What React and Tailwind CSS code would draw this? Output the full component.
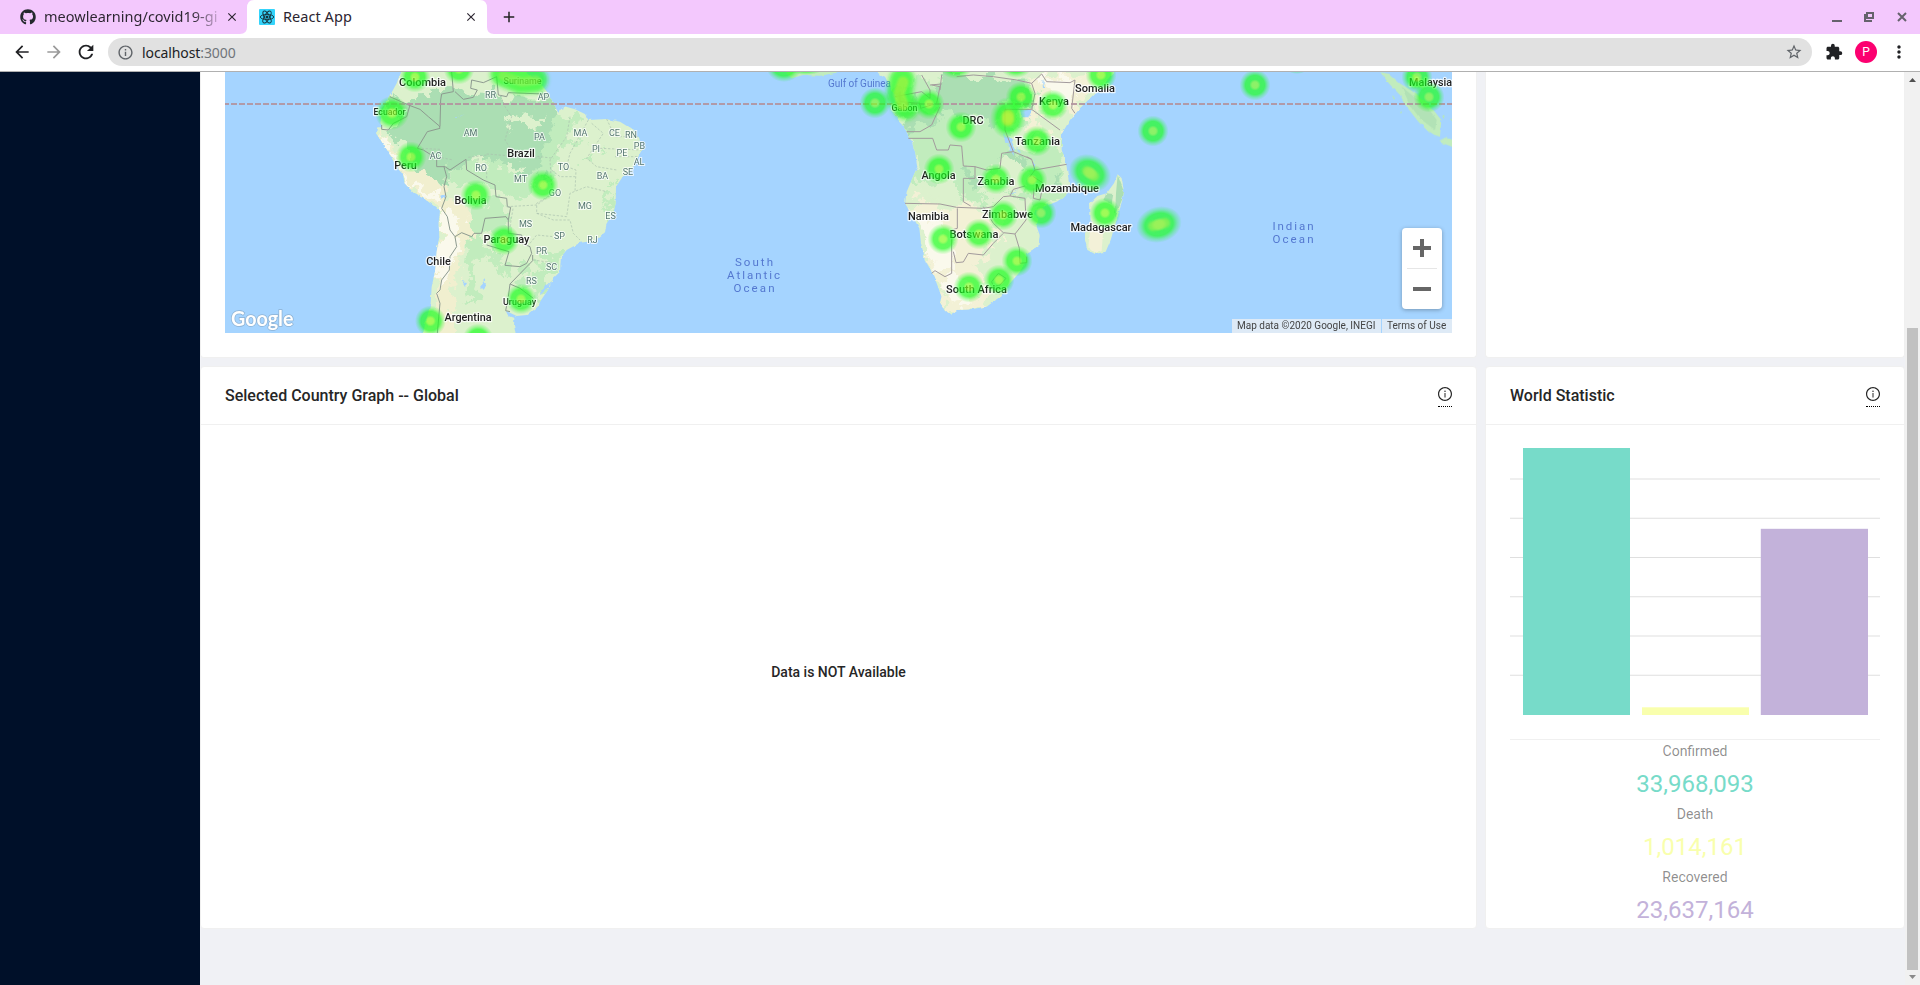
import React from "react";
import { MdExtension, MdStarBorder, MdArrowBack, MdArrowForward, MdRefresh, MdMoreVert, MdInfoOutline, MdClose, MdAdd } from "react-icons/md";
import { FaGithub } from "react-icons/fa";
import { AiOutlineInfoCircle } from "react-icons/ai";

const UI = "font-['Noto_Sans','Open_Sans',sans-serif]";

function ReactIcon() {
  return (
    <svg className="size-4" viewBox="0 0 16 16">
      <rect width="16" height="16" rx="1" fill="#35d4fb" />
      <g fill="none" stroke="#16323c" strokeWidth="0.9">
        <ellipse cx="8" cy="8" rx="6.7" ry="2.6" />
        <ellipse cx="8" cy="8" rx="6.7" ry="2.6" transform="rotate(60 8 8)" />
        <ellipse cx="8" cy="8" rx="6.7" ry="2.6" transform="rotate(120 8 8)" />
      </g>
      <circle cx="8" cy="8" r="1.5" fill="#16323c" />
    </svg>
  );
}

function TabBar() {
  return (
    <div className={`flex h-[34px] shrink-0 items-end bg-[#f3c8fd] text-[#2b2530] ${UI}`}>
      <div className="flex h-[34px] w-[240px] items-center pl-5">
        <FaGithub className="size-4 shrink-0 text-[#24292e]" />
        <div className="ml-2 w-[174px] shrink-0 whitespace-nowrap bg-gradient-to-r from-[#2b2530] from-85% to-[#2b2530]/20 bg-clip-text text-[14.5px] tracking-[0.02px] text-transparent">
          meowlearning/covid19-gi
        </div>
        <MdClose className="ml-[7px] size-3.5 shrink-0" />
      </div>
      <svg className="h-[34px] w-[14px] shrink-0" viewBox="0 0 14 34">
        <path d="M0 34 Q7 34 7 27 V8 Q7 0 14 0 V34 Z" fill="#fff" />
      </svg>
      <div className="flex h-[34px] w-[226px] items-center bg-white pl-[5px]">
        <ReactIcon />
        <span className="ml-2 w-[181px] text-[14.5px] tracking-[0.05px]">React App</span>
        <MdClose className="size-3.5" />
      </div>
      <svg className="h-[34px] w-[14px] shrink-0" viewBox="0 0 14 34">
        <path d="M14 34 Q7 34 7 27 V8 Q7 0 0 0 V34 Z" fill="#fff" />
      </svg>
      <div className="flex h-[34px] items-center pl-1.5">
        <MdAdd className="size-[18px] text-[#222]" />
      </div>
      <svg className="ml-auto mr-3 h-[34px] w-[77px]" viewBox="0 0 77 34">
        <g fill="none" stroke="#65626c" strokeWidth="2">
          <path d="M1 21H11" />
          <path d="M36 13H42V18H36Z" />
          <path d="M34 14V21H41" />
          <path d="M67 13L75 21M75 13L67 21" />
        </g>
      </svg>
    </div>
  );
}

function Toolbar() {
  return (
    <div className={`flex h-[38px] shrink-0 items-center border-b border-[#b0b0b0] bg-white pb-px pl-3 text-[#202124] ${UI}`}>
      <MdArrowBack className="size-5" />
      <MdArrowForward className="ml-3 size-5 text-[#9a9a9a]" />
      <MdRefresh className="ml-[11px] size-[22px]" />
      <div className="ml-[11px] flex h-7 w-[1704px] items-center rounded-full bg-[#e1e1e1] pl-[9px] pr-[9px]">
        <MdInfoOutline className="size-[17px] text-[#5f6368]" />
        <span className="ml-2 text-[14px] tracking-[-0.1px]">
          localhost<span className="text-[#70757a]">:3000</span>
        </span>
        <MdStarBorder className="ml-auto size-[18px] text-[#5f6368]" />
      </div>
      <MdExtension className="ml-[13px] size-[18px]" />
      <div className="ml-3 flex size-[22px] items-center justify-center rounded-full bg-[#fc0070] text-[12px] leading-none text-white font-['Roboto',sans-serif]">P</div>
      <MdMoreVert className="ml-3 size-5" />
    </div>
  );
}

/* Map geometry is kept in thirds of a pixel, one local frame for each continent. */
const SA = "translate(340 70) scale(0.33333)";
const AF = "translate(840 70) scale(0.33333)";
const AS = "translate(1100 70) scale(0.33333)";

const SA_LAND =
  "M190 -10L170 40L148 80L135 105L125 130L121 160L130 172L112 172L108 190L125 215L145 245L165 282L188 308L194 340L220 368L255 388L285 410L300 422L296 460L298 500L290 545L286 600L275 650L272 700L262 740L246 800H528L522 765L523 745L505 738L497 722L530 738L560 735L590 710L610 680L630 650L640 625L660 605L663 560L680 540L720 518L765 512L795 487L800 460L820 430L827 400L828 350L845 325L880 290L905 240L898 205L880 180L840 155L800 147L745 150L735 132L705 118L670 108L655 128L640 100L625 70L600 40L560 10V-10Z";
const AF_LAND =
  "M105 -10L115 10L135 20L150 50L165 75L166 95L155 120L170 145L190 165L202 190L215 215L225 245L232 290L215 330L200 365L195 400L215 435L238 475L243 520L255 570L275 605L290 640L305 680L300 697L315 720L332 734L350 720L390 718L440 710L480 680L510 640L540 605L560 575L558 550L595 530L599 495L590 470L595 445L580 430L610 410L650 395L680 375L687 340L680 290L672 260L665 240L666 190L690 150L720 115L780 55L822 10V-10Z";
const MADAGASCAR =
  "M833 313L845 325L852 365L845 400L832 440L812 510L797 545L765 552L742 540L735 510L735 490L752 460L750 400L772 378L800 370L822 340Z";
const SUMATRA =
  "M840 6L868 12L900 40L930 58L965 85L1000 120L1024 150L1020 200L1008 198L980 180L955 155L920 110L900 75L868 42Z";
const JAVA = "M1018 212L1035 203L1070 212V236L1035 222Z";

const SEA_LABELS = [
  ["South", 754, 266, 38],
  ["Atlantic", 753.5, 279, 53],
  ["Ocean", 754, 292, 41],
  ["Indian", 1293, 230, 41],
  ["Ocean", 1293, 243, 41],
];

const COUNTRIES = [
  ["Colombia", 422.5, 86, 47], ["Ecuador", 389.5, 115.5, 32, 9], ["Peru", 405.5, 169.5, 22.5],
  ["Brazil", 521, 157, 27.5], ["Bolivia", 470.5, 204.5, 32], ["Paraguay", 506.5, 243.5, 46],
  ["Chile", 438.5, 265.5, 24.5], ["Uruguay", 519.5, 305.5, 33, 9], ["Argentina", 468, 321.5, 47],
  ["Suriname", 522.5, 84.5, 38, 9], ["Somalia", 1095, 92, 40], ["Kenya", 1054, 105, 30],
  ["DRC", 973, 124, 21], ["Gabon", 904.5, 111, 26, 9], ["Tanzania", 1037.5, 145, 45],
  ["Angola", 938.5, 179, 34], ["Zambia", 996, 185, 37], ["Mozambique", 1067, 192, 64],
  ["Namibia", 928.5, 220, 41], ["Zimbabwe", 1007.5, 218, 51], ["Botswana", 974, 238, 49],
  ["Madagascar", 1101, 231, 61], ["South Africa", 976.5, 293, 61], ["Malaysia", 1430.5, 86, 43],
];

const STATES = [
  ["RR", 490.5, 98], ["AP", 543.5, 99.5], ["AM", 470.5, 135.5], ["PA", 539.5, 139.5],
  ["MA", 580.5, 135.5], ["CE", 614.5, 135.5], ["RN", 631, 137.5], ["PB", 639.5, 148.5],
  ["PE", 622, 155.5], ["PI", 596, 151.5], ["AL", 639, 164.5], ["SE", 628, 174.5],
  ["BA", 602.5, 178.5], ["TO", 563.5, 169.5], ["AC", 435.5, 158.5], ["RO", 481, 170.5],
  ["MT", 520.5, 181.5], ["GO", 555, 195.5], ["MG", 585, 208.5], ["ES", 610.5, 218.5],
  ["MS", 525.5, 226.5], ["SP", 559.5, 238.5], ["RJ", 592.5, 242.5], ["PR", 541.5, 253.5],
  ["SC", 551.5, 269.5], ["RS", 531.5, 283.5],
];

/* x, y, rx, ry, rotation */
const HEAT = [
  [415, 77], [459, 69],
  [392, 113, 17, 17], [411, 157], [476, 195], [543, 185], [504, 240], [521, 299], [430.5, 321], [478, 339],
  [784, 66, 18, 16], [806, 66, 20, 9], [875, 103], [929, 104],
  [956, 64, 18, 15], [1016, 64, 17, 14], [1021, 97], [1053, 105], [1008, 118, 18, 21], [961, 127], [1037, 141],
  [1101, 75], [1153, 131], [1090, 173, 22, 18, 30], [1159, 224.5, 23, 18, -15], [939, 169], [996, 179],
  [1032, 180], [1041, 213], [1003, 215], [979, 234], [943, 239], [1105, 213], [1017, 261], [999, 280],
  [969, 287], [1255, 85], [1297, 62, 15, 12], [1417, 77], [1429, 97],
];

const SA_DARK =
  "M150 85L250 88L300 60L420 62L470 78L560 88L630 85L655 125L640 160L625 190L622 230L605 270L600 310L560 335L520 310L480 290L470 250L430 265L410 290L375 280L345 292L320 300L318 350L290 335L240 310L215 290L205 240L170 205L140 190L165 150Z";
const SA_MID =
  "M250 88L620 78L650 130L720 150L690 200L720 215L650 230L660 270L640 300L600 345L540 380L500 365L430 330L330 350L320 300L210 280Z M400 430L470 385L510 400L480 470L420 500L395 600L370 620L385 500Z M430 440L500 450L505 490L425 490Z M560 590L600 600L660 600L640 640L600 690L570 660L520 640Z M590 560L660 540L680 540L660 560L655 600L600 590Z M500 580L490 620L470 600L445 560L410 560L400 620L420 680L400 720L380 640L395 540L480 540Z M740 290L770 260L760 235L745 270Z M800 330L828 350L820 430L790 460L810 390Z";
const SA_CREAM =
  "M110 175L150 215L195 275L245 310L305 345L318 385L380 410L395 440L385 500L360 560L345 620L350 700L330 800H246L272 700L286 600L296 500L300 422L220 368L180 310L108 190Z";
const SA_WHITE =
  "M300 425L335 440L370 430L360 490L340 560L320 600L295 680L290 620L300 520Z M160 275L200 320L280 375L300 400L255 380L200 335Z M120 185L150 230L180 290L165 280L125 215Z";

const AF_DARK =
  "M300 15L460 15L530 25L560 60L530 100L490 110L480 150L460 180L440 150L350 145L300 130L280 80Z M165 80L250 75L240 120L290 130L255 170L200 175L160 125Z M545 60L580 80L575 115L540 110Z M480 260L530 250L560 270L520 290L490 280Z M370 300L420 310L400 350L370 330Z M640 310L672 320L665 360L640 345Z";
const AF_MID =
  "M160 55L300 20L580 40L560 120L500 190L520 240L600 230L665 210L687 340L650 395L600 410L570 380L500 370L440 390L400 400L300 350L215 330L232 290L215 215L160 130Z";
const AF_CREAM =
  "M205 390L300 405L430 415L480 460L480 520L440 560L400 590L440 640L440 700L332 734L300 697L305 680L243 520L238 475L195 405Z M580 20L720 10L800 10L700 120L660 170L580 110Z M540 110L600 140L640 190L600 220L560 190Z";
const AF_WHITE =
  "M215 430L260 440L330 500L335 600L300 600L250 540Z M295 640L340 620L400 650L380 690L320 700Z M600 15L700 35L690 110L640 120L620 50Z";

const SA_BORDERS = [
  "M150 80L205 105L240 118L265 140L298 168L300 175L262 185L232 235L250 240L290 265L290 290L315 290L330 300L378 268L380 300L430 330L465 345L468 380L500 385L502 410L512 412L505 450L498 440L435 445L425 490L402 490L395 500L365 488L345 500L330 480L322 440L305 415L318 380L312 350L320 320L312 290",
  "M300 170L302 90L305 72L340 65L335 5",
  "M345 65L370 88L400 82L412 60L392 55L395 30L430 38L470 20L475 75L500 80L505 68L610 72",
  "M125 165L125 178L145 180L160 160L200 140L210 105",
  "M505 450L505 490L545 495L545 520L570 530L575 550L560 580L540 590L495 586L507 545L440 525",
  "M345 500L350 530L330 560L328 600L305 630L300 660L290 670L300 700L292 789",
  "M578 555L578 572L510 642L505 680L497 722L510 725M510 642L540 655L580 685",
];
const SA_STATES = [
  "M245 235L300 238L300 262L340 270M440 252L605 265M385 262L440 255M480 75L495 110L515 140L495 210L520 250",
  "M690 140L680 200L630 270L635 350M745 150L690 250L680 290L708 300L705 365M635 300L660 320L705 320",
  "M500 410L590 405L640 370L590 400L590 430L680 440L690 370L740 350L800 365",
  "M590 430L640 450L690 450L700 490L720 510M510 470L520 410M570 520L590 495L640 500M580 570L650 580",
  "M755 160L790 190L740 265L770 290L830 300M800 147L825 200L895 200M780 235L905 240M825 260L895 260",
  "M520 250L640 265M415 265L410 285L440 300L440 330",
];
const AF_BORDERS = [
  "M165 80L245 65L270 85L270 60L245 15M180 65L180 95L240 100L242 115L290 100L300 50L275 45M300 60L305 15",
  "M200 185L240 185L275 165L300 110M205 205L278 205L290 240L325 240L330 225L365 228L370 288L405 290L405 325L370 325L370 395L392 408",
  "M270 45L305 42M350 20L400 15L460 20L530 30L575 40L605 12M575 40L585 70L575 118L495 118L495 180L520 245L485 250L480 295L440 300L405 290",
  "M575 118L660 180M605 12L620 35L690 38L705 30L695 115L705 130M520 245L575 268L585 300L680 283",
  "M575 268L560 260M580 320L610 340L600 390L580 385L582 355M510 378L520 358L555 348M585 300L570 320",
  "M195 400L300 402L350 412L430 415L460 410L490 380L510 378L555 385L558 450L525 492L490 488L460 460L430 410M352 415L352 475L335 480L335 610L315 620L285 602L275 610",
  "M340 545L348 578L370 576L385 550L430 555L460 520L490 490M525 492L538 535L540 580L560 578L560 560M455 635L475 610L498 625L480 645L460 650Z",
];

function WorldMap() {
  return (
    <svg className="block h-[261px] w-[1227px]" viewBox="225 72 1227 261">
      <defs>
        <radialGradient id="heat">
          <stop offset="0" stopColor="#86ff20" stopOpacity="0.68" />
          <stop offset="0.2" stopColor="#7cff20" stopOpacity="0.68" />
          <stop offset="0.36" stopColor="#1cff1c" stopOpacity="0.7" />
          <stop offset="0.62" stopColor="#18ff1c" stopOpacity="0.68" />
          <stop offset="0.8" stopColor="#18ff1c" stopOpacity="0.3" />
          <stop offset="1" stopColor="#18ff1c" stopOpacity="0" />
        </radialGradient>
        <filter id="glow" filterUnits="userSpaceOnUse" x="440" y="50" width="520" height="90">
          <feGaussianBlur stdDeviation="2.2" />
        </filter>
        <filter id="soft" filterUnits="userSpaceOnUse" x="440" y="50" width="760" height="220">
          <feGaussianBlur stdDeviation="1.1" />
        </filter>
        <filter id="rough" x="-5%" y="-5%" width="110%" height="110%">
          <feTurbulence type="fractalNoise" baseFrequency="0.12" numOctaves="3" seed="4" />
          <feDisplacementMap in="SourceGraphic" scale="7" xChannelSelector="R" yChannelSelector="G" />
        </filter>
        <filter id="veg" x="-5%" y="-5%" width="110%" height="110%">
          <feTurbulence type="fractalNoise" baseFrequency="0.07" numOctaves="4" seed="9" />
          <feDisplacementMap in="SourceGraphic" scale="32" xChannelSelector="R" yChannelSelector="G" />
        </filter>
        <filter id="coast">
          <feTurbulence type="fractalNoise" baseFrequency="0.15" numOctaves="2" seed="2" />
          <feDisplacementMap in="SourceGraphic" scale="3" xChannelSelector="R" yChannelSelector="G" />
        </filter>
        <clipPath id="sa"><path transform={SA} d={SA_LAND} /></clipPath>
        <clipPath id="af"><path transform={AF} d={AF_LAND} /></clipPath>
      </defs>
      <rect x="225" y="72" width="1227" height="261" fill="#a5d4ff" />

      <g filter="url(#coast)">
        <g clipPath="url(#sa)">
          <rect x="340" y="60" width="320" height="290" fill="#dcf1cd" />
          <g filter="url(#veg)"><g transform={SA}>
            <path d={SA_MID} fill="#c1ecbd" />
            <path d={SA_DARK} fill="#abdeb3" />
            <path d={SA_CREAM} fill="#f1efcf" />
            <path d={SA_WHITE} fill="#faf9ec" />
            <path d="M500 150L560 130L620 150L580 170L520 165Z M480 290L560 290L530 320L490 315Z M170 40L200 30L220 80L180 75Z M400 265L450 270L440 300L405 295Z" fill="#dcf1cd" />
          </g></g>
        </g>
        <g clipPath="url(#af)">
          <rect x="860" y="60" width="300" height="270" fill="#dcf1cd" />
          <g filter="url(#veg)"><g transform={AF}>
            <path d={AF_MID} fill="#c1ecbd" />
            <path d={AF_DARK} fill="#abdeb3" />
            <path d={AF_CREAM} fill="#f3f1d6" />
            <path d={AF_WHITE} fill="#faf9ec" />
            <path d="M500 270L560 290L550 350L500 365L450 390L410 370L440 320Z M240 340L340 330L360 395L230 390Z M590 130L640 150L655 200L610 190Z M440 520L530 500L550 570L500 640L450 690L430 620Z" fill="#dcf1cd" />
          </g></g>
        </g>
        <g transform={AF}>
          <path d={MADAGASCAR} fill="#dcf1cd" />
          <path d="M833 315L852 365L843 400L825 440L828 370Z M800 370L820 372L815 400L790 390Z" fill="#abdeb3" />
          <path d="M752 470L790 480L785 540L765 548L745 530Z" fill="#f3f1d8" />
          <path d="M540 120L575 120L565 142L545 142Z" fill="#a5d4ff" />
          <path d="M-160 10L-145 25L-110 15L-60 17L-10 8V-5H-160Z" fill="#c1ecbd" />
        </g>
        <g transform={AS}>
          <path d={SUMATRA} fill="#c1ecbd" />
          <path d="M905 50L935 75L985 115L1010 150L1005 180L960 145L930 105Z" fill="#abdeb3" opacity="0.7" />
          <path d={JAVA} fill="#c1ecbd" />
          <path d="M925 5L955 20L975 60L950 45Z" fill="#c1ecbd" />
          <path d="M875 80l10 3l-2 6z M898 120l8 4l-3 8z M1026 137l8 2l-2 8z M1050 146l8 2v8z" fill="#b8e9b4" />
        </g>
      </g>

      <g filter="url(#rough)" fill="#a5d4ff">
        <path d="M440 196l4-2l2 3l-3 2z M480 286l4-5l2 3l-4 4z M462 282l5 1l-2 4z M541 290l10-8l-1 5l-8 6z M455 118l10-4l-8 4z M560 107l5 -3l-2 6z" />
        <path d="M1005 132l3 14l7 10l-1 -8l-5-10z M1015 147l8 4l-1 1z M1034 158l2 12h-2z M1011 193l7-3l-6 4z M1042 80l3 8h-2z" />
      </g>

      <g fill="none" stroke="#8d9a90" strokeWidth="3" strokeLinejoin="round">
        <g transform={SA}>{SA_BORDERS.map((d) => <path key={d} d={d} />)}</g>
        <g transform={AF} stroke="#a29a9c">{AF_BORDERS.map((d) => <path key={d} d={d} />)}</g>
        <g transform={SA} strokeWidth="2" strokeDasharray="7 5" stroke="#a9bfae">
          {SA_STATES.map((d) => <path key={d} d={d} />)}
        </g>
      </g>
      <path d="M223 104H1452" stroke="#b3949f" strokeOpacity="0.9" strokeWidth="2" strokeDasharray="6 2" />

      <g fontFamily="Roboto, sans-serif" textAnchor="middle">
        <g fill="#5478d0" fontSize="11.5">
          {SEA_LABELS.map((l) => (
            <text key={`${l[0]}${l[1]}`} x={l[1]} y={l[2]} textLength={l[3]}>{l[0]}</text>
          ))}
          <text x="859.5" y="86.5" fontSize="10" textLength="63">Gulf of Guinea</text>
        </g>
        <g fill="#55776f" fontSize="9" stroke="#ffffff" strokeOpacity="0.75" strokeWidth="2" paintOrder="stroke">
          {STATES.map((l) => (
            <text key={l[0]} x={l[1]} y={l[2]}>{l[0]}</text>
          ))}
        </g>
        <g fill="#1f1f1f" fontWeight="500" stroke="#ffffff" strokeOpacity="0.8" strokeWidth="2.4" paintOrder="stroke" strokeLinejoin="round">
          {COUNTRIES.map((l) => (
            <text key={l[0]} x={l[1]} y={l[2] - 0.3} textLength={l[3]} lengthAdjust="spacingAndGlyphs" fontSize={l[4] || 11}>{l[0]}</text>
          ))}
        </g>
      </g>

      <g fill="none" strokeLinecap="round" strokeLinejoin="round" stroke="#1cff1c" strokeOpacity="0.7" filter="url(#glow)">
        <path d="M902 80L899 96L906 107" strokeWidth="25" />
        <path d="M503 74L520 81L535 80" strokeWidth="25" />
      </g>
      {HEAT.map((h, i) => (
        <ellipse
          key={i}
          cx={h[0]}
          cy={h[1]}
          rx={h[2] || 15.5}
          ry={h[3] || 15.5}
          transform={`rotate(${h[4] || 0} ${h[0]} ${h[1]})`}
          fill="url(#heat)"
        />
      ))}
      <g fill="none" strokeLinecap="round" strokeLinejoin="round" stroke="#a4f050" strokeOpacity="0.6" filter="url(#soft)">
        <path d="M903 82L899 94L903 105" strokeWidth="11" stroke="#b0f03c" />
        <path d="M1008 116V120" strokeWidth="13" stroke="#c0ec30" />
        <path d="M1087 171L1094 176" strokeWidth="10" />
        <path d="M1153 226L1165 223" strokeWidth="10" />
        <path d="M503 76L522 82L536 80" strokeWidth="9" strokeOpacity="0.45" />
      </g>
      <text x="231" y="325.5" fontSize="21.5" textLength="62.5" lengthAdjust="spacingAndGlyphs" fill="#fff" stroke="#7f9bb5" strokeOpacity="0.6" strokeWidth="1.6" paintOrder="stroke" fontFamily="Lato, sans-serif" fontWeight="700">Google</text>
    </svg>
  );
}

function ZoomControl() {
  return (
    <div className="absolute bottom-6 right-2.5 flex h-[81px] w-10 flex-col items-center rounded-sm bg-white shadow-[0_1px_4px_rgba(0,0,0,0.3)]">
      <svg className="h-10 w-10" viewBox="0 0 40 40"><path d="M11 20H29M20 11V29" stroke="#666" strokeWidth="4" /></svg>
      <div className="h-px w-[30px] bg-[#e6e6e6]" />
      <svg className="h-10 w-10" viewBox="0 0 40 40"><path d="M11 20H29" stroke="#666" strokeWidth="4" /></svg>
    </div>
  );
}

function CardHeader({ title }) {
  return (
    <div className="flex h-[58px] shrink-0 items-center justify-between border-b border-[#f0f0f0] px-6">
      <h2 className="text-[16px] font-medium leading-6 text-[#262626]">{title}</h2>
      <div className="mt-0.5 flex h-[21px] w-3.5 justify-center border-b border-dotted border-black">
        <AiOutlineInfoCircle className="size-4 shrink-0 text-[#262626]" />
      </div>
    </div>
  );
}

function BarChart() {
  const lines = [479, 518.3, 557.5, 596.7, 636, 675.3];
  return (
    <svg className="block h-[314px] w-[370px]" viewBox="1510 425 370 314">
      {lines.map((y) => (
        <path key={y} d={`M1510 ${y}H1880`} stroke="#dfdfdf" strokeWidth="1.1" />
      ))}
      <rect x="1523" y="448" width="107" height="267" fill="#77dbc9" />
      <rect x="1642" y="707.3" width="107" height="7.7" fill="#f9ffad" />
      <rect x="1760.8" y="528.8" width="107.2" height="186.2" fill="#c3b2da" />
    </svg>
  );
}

function Statistic({ label, value, color }) {
  return (
    <div className="flex h-[63px] flex-col items-center">
      <div className="mb-1 text-[14px] leading-[22px] text-black/45">{label}</div>
      <div className={`text-[24px] leading-[36px] ${color}`}>{value}</div>
    </div>
  );
}

function Scrollbar() {
  return (
    <div className="flex w-[15px] shrink-0 flex-col items-center bg-[#f1f1f1]">
      <svg className="h-[15px] w-[15px]" viewBox="0 0 15 15"><path d="M4 10L7.5 6L11 10Z" fill="#505050" /></svg>
      <div className="mt-[241px] h-[642px] w-[11px] bg-[#c1c1c1]" />
      <svg className="h-[15px] w-[15px]" viewBox="0 0 15 15"><path d="M4 5L7.5 9L11 5Z" fill="#8a8a8a" /></svg>
    </div>
  );
}

export default function App() {
  return (
    <div className="flex h-[985px] w-[1920px] flex-col overflow-hidden bg-white">
      <TabBar />
      <Toolbar />
      <div className="flex min-h-0 flex-1 font-['Roboto',sans-serif]">
        <aside className="w-[200px] shrink-0 bg-[#001029]" />
        <main className="grid flex-1 grid-cols-[1277px_420px] grid-rows-[286px_563px] content-start gap-2 bg-[#f0f1f5]">
          <section className="rounded-b-sm border border-t-0 border-[#f0f0f0] bg-white px-6 pb-6">
            <div className="relative h-[261px] overflow-hidden">
              <WorldMap />
              <ZoomControl />
              <div className="absolute bottom-0 right-0 flex h-3.5 gap-px text-[10px] leading-[14px] text-[#444]">
                <span className="w-[149px] whitespace-nowrap bg-[#deeaf6] pl-[5px]">Map data ©2020 Google, INEGI</span>
                <span className="w-[70px] whitespace-nowrap bg-[#deeaf6] pl-[5px]">Terms of Use</span>
              </div>
            </div>
          </section>
          <section className="rounded-b-sm border border-t-0 border-[#f0f0f0] bg-white" />
          <section className="flex flex-col rounded-sm border border-[#f0f0f0] bg-white">
            <CardHeader title="Selected Country Graph -- Global" />
            <div className="flex flex-1 items-center justify-center pb-[9px] text-[14px] font-medium text-[#262626]">Data is NOT Available</div>
          </section>
          <section className="flex flex-col overflow-hidden rounded-sm border border-[#f0f0f0] bg-white">
            <CardHeader title="World Statistic" />
            <div className="px-6">
              <BarChart />
              <div className="border-t border-[#f0f0f0]">
                <Statistic label="Confirmed" value="33,968,093" color="text-[#77dbc9]" />
                <Statistic label="Death" value="1,014,161" color="text-[#f9ffad]" />
                <Statistic label="Recovered" value="23,637,164" color="text-[#c3b2da]" />
              </div>
            </div>
          </section>
        </main>
        <Scrollbar />
      </div>
    </div>
  );
}
